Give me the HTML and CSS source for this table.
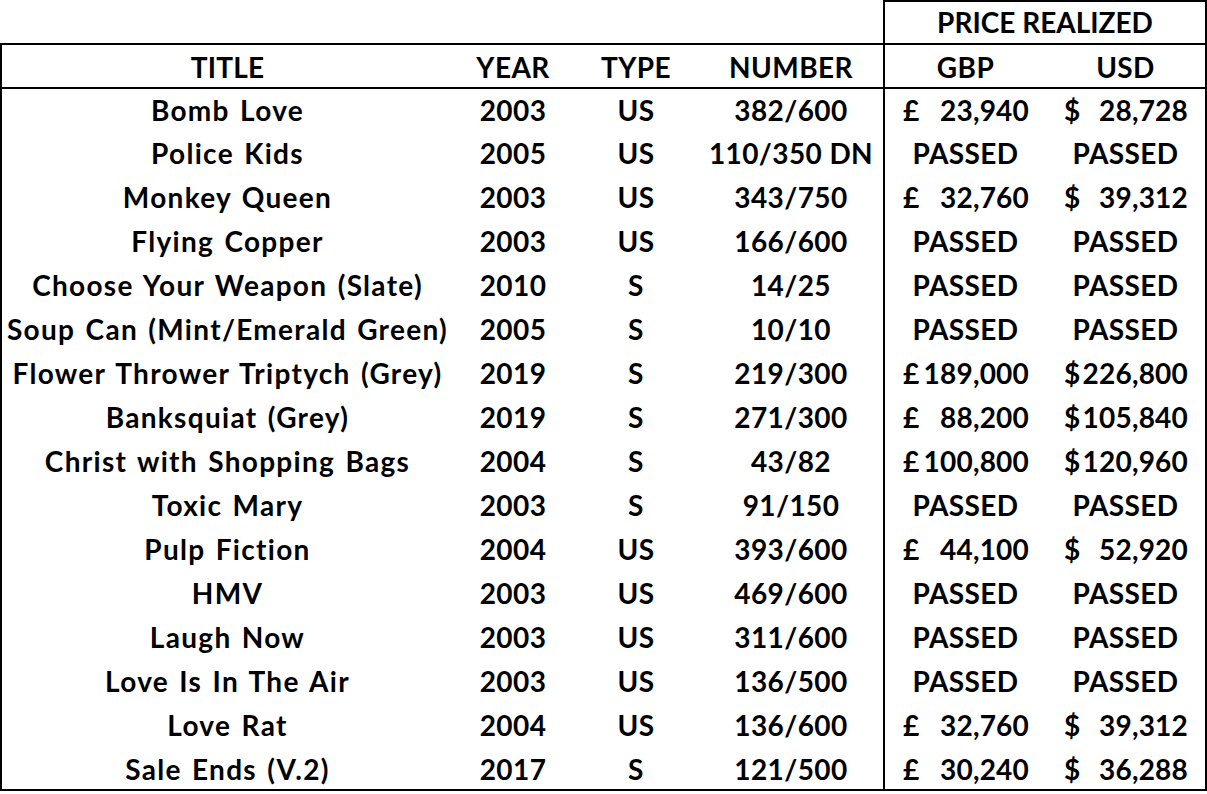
FILE: index.html
```html
<!DOCTYPE html>
<html lang="en">
<head>
<meta charset="utf-8">
<title>Banksy Prints – Price Realized</title>
<link rel="stylesheet" href="styles.css">
</head>
<body>
<table class="sheet">
  <colgroup>
    <col class="c-title">
    <col class="c-year">
    <col class="c-type">
    <col class="c-num">
    <col class="c-gbp">
    <col class="c-usd">
  </colgroup>
  <thead>
    <tr class="row-top">
      <td class="blank" colspan="4"></td>
      <th class="group" colspan="2">PRICE REALIZED</th>
    </tr>
    <tr class="row-head">
      <th class="first">TITLE</th>
      <th>YEAR</th>
      <th>TYPE</th>
      <th>NUMBER</th>
      <th class="gbp">GBP</th>
      <th class="usd">USD</th>
    </tr>
  </thead>
  <tbody>
    <tr><td class="first">Bomb Love</td><td>2003</td><td>US</td><td>382/600</td><td class="gbp"><span class="acc"><span>£</span><span>23,940</span></span></td><td class="usd"><span class="acc"><span>$</span><span>28,728</span></span></td></tr>
    <tr><td class="first">Police Kids</td><td>2005</td><td>US</td><td>110/350 DN</td><td class="gbp">PASSED</td><td class="usd">PASSED</td></tr>
    <tr><td class="first">Monkey Queen</td><td>2003</td><td>US</td><td>343/750</td><td class="gbp"><span class="acc"><span>£</span><span>32,760</span></span></td><td class="usd"><span class="acc"><span>$</span><span>39,312</span></span></td></tr>
    <tr><td class="first">Flying Copper</td><td>2003</td><td>US</td><td>166/600</td><td class="gbp">PASSED</td><td class="usd">PASSED</td></tr>
    <tr><td class="first">Choose Your Weapon (Slate)</td><td>2010</td><td>S</td><td>14/25</td><td class="gbp">PASSED</td><td class="usd">PASSED</td></tr>
    <tr><td class="first">Soup Can (Mint/Emerald Green)</td><td>2005</td><td>S</td><td>10/10</td><td class="gbp">PASSED</td><td class="usd">PASSED</td></tr>
    <tr><td class="first">Flower Thrower Triptych (Grey)</td><td>2019</td><td>S</td><td>219/300</td><td class="gbp"><span class="acc"><span>£</span><span>189,000</span></span></td><td class="usd"><span class="acc"><span>$</span><span>226,800</span></span></td></tr>
    <tr><td class="first">Banksquiat (Grey)</td><td>2019</td><td>S</td><td>271/300</td><td class="gbp"><span class="acc"><span>£</span><span>88,200</span></span></td><td class="usd"><span class="acc"><span>$</span><span>105,840</span></span></td></tr>
    <tr><td class="first">Christ with Shopping Bags</td><td>2004</td><td>S</td><td>43/82</td><td class="gbp"><span class="acc"><span>£</span><span>100,800</span></span></td><td class="usd"><span class="acc"><span>$</span><span>120,960</span></span></td></tr>
    <tr><td class="first">Toxic Mary</td><td>2003</td><td>S</td><td>91/150</td><td class="gbp">PASSED</td><td class="usd">PASSED</td></tr>
    <tr><td class="first">Pulp Fiction</td><td>2004</td><td>US</td><td>393/600</td><td class="gbp"><span class="acc"><span>£</span><span>44,100</span></span></td><td class="usd"><span class="acc"><span>$</span><span>52,920</span></span></td></tr>
    <tr><td class="first">HMV</td><td>2003</td><td>US</td><td>469/600</td><td class="gbp">PASSED</td><td class="usd">PASSED</td></tr>
    <tr><td class="first">Laugh Now</td><td>2003</td><td>US</td><td>311/600</td><td class="gbp">PASSED</td><td class="usd">PASSED</td></tr>
    <tr><td class="first">Love Is In The Air</td><td>2003</td><td>US</td><td>136/500</td><td class="gbp">PASSED</td><td class="usd">PASSED</td></tr>
    <tr><td class="first">Love Rat</td><td>2004</td><td>US</td><td>136/600</td><td class="gbp"><span class="acc"><span>£</span><span>32,760</span></span></td><td class="usd"><span class="acc"><span>$</span><span>39,312</span></span></td></tr>
    <tr class="last"><td class="first">Sale Ends (V.2)</td><td>2017</td><td>S</td><td>121/500</td><td class="gbp"><span class="acc"><span>£</span><span>30,240</span></span></td><td class="usd"><span class="acc"><span>$</span><span>36,288</span></span></td></tr>
  </tbody>
</table>
</body>
</html>
```

FILE: styles.css
```css
html, body {
  margin: 0;
  padding: 0;
  background: #ffffff;
}

body {
  font-family: "Lato", "Open Sans", "Liberation Sans", sans-serif;
  font-weight: 700;
  font-size: 28px;
  color: #000000;
}

.sheet {
  border-collapse: collapse;
  table-layout: fixed;
  width: 1205px;
  margin: 0;
}

.c-title { width: 452px; }
.c-year  { width: 120px; }
.c-type  { width: 126px; }
.c-num   { width: 185px; }
.c-gbp   { width: 162px; }
.c-usd   { width: 160px; }

.sheet th,
.sheet td {
  padding: 4px 0 0 0;
  text-align: center;
  vertical-align: top;
  white-space: nowrap;
  font-weight: 700;
  line-height: 34px;
  letter-spacing: 0.4px;
}

.row-top { height: 43px; }
.row-head { height: 44px; }
.sheet tbody tr { height: 44px; }
.sheet tbody tr.last { height: 42px; }

.row-top th,
.row-top td { padding-top: 3px; letter-spacing: 0; }
.row-head th { padding-top: 5px; }

.row-head th.first { letter-spacing: 0.2px; }

.sheet tbody td.first {
  letter-spacing: 1.3px;
  word-spacing: 2.2px;
}

.row-top .group {
  border: 2px solid #000;
}

.row-top .blank {
  border-bottom: 2px solid #000;
}

.row-head th {
  border-bottom: 2px solid #000;
}

.first { border-left: 2px solid #000; }
.gbp   { border-left: 2px solid #000; }
.usd   { border-right: 2px solid #000; }

.sheet tr.last td {
  border-bottom: 2px solid #000;
}

.acc {
  display: flex;
  justify-content: space-between;
  padding: 0 17px 0 18px;
  letter-spacing: 0.2px;
}
```
